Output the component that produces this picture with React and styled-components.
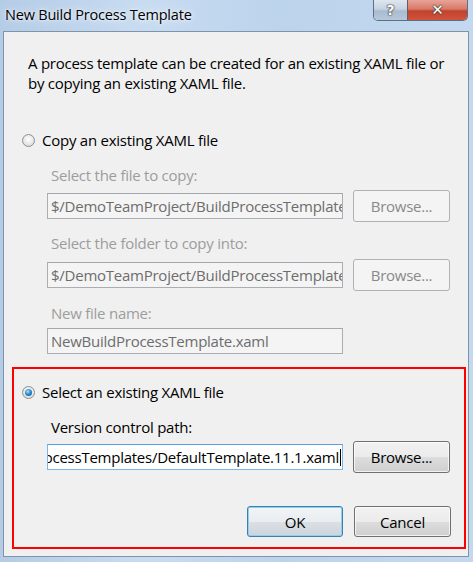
import React from 'react'
import styled, { createGlobalStyle } from 'styled-components'

const GlobalStyle = createGlobalStyle`
    html, body {
        margin: 0;
        padding: 0;
    }
    body {
        width: 473px;
        height: 562px;
        overflow: hidden;
        font-family: "Open Sans", "Noto Sans", sans-serif;
    }
`

export const Frame = styled('div')`
    width: 473px;
    height: 562px;
    box-sizing: border-box;
    display: flex;
    flex-direction: column;
    padding: 0 4px 5px 3px;
    background: linear-gradient(90deg, #b4cce6 0%, #c8dcf1 30%, #bcd3ec 60%, #c4d9ef 100%);
`

export const TitleBar = styled('div')`
    height: 31px;
    display: flex;
    align-items: flex-start;
    justify-content: space-between;
    margin-left: -3px;
    margin-right: -4px;
    padding-left: 5px;
    padding-right: 5px;
`

export const Title = styled('span')`
    font-size: 14.5px;
    letter-spacing: -0.2px;
    line-height: 30px;
    color: #000;
    text-shadow: 0 0 8px rgba(255, 255, 255, 0.9), 0 0 3px rgba(255, 255, 255, 0.9);
`

export const CaptionButtons = styled('div')`
    display: flex;
    height: 21px;
    border: 1px solid #5a6f8a;
    border-top: none;
    border-radius: 0 0 5px 5px;
    overflow: hidden;
    box-sizing: border-box;
`

export const CaptionButton = styled('div')`
    width: ${({ $w }) => $w}px;
    display: flex;
    align-items: center;
    justify-content: center;
    font-family: "DejaVu Sans", sans-serif;
    font-weight: bold;
    font-size: ${({ $close }) => ($close ? '15px' : '14px')};
    color: #fff;
    text-shadow: 0 0 1px #333, 0 0 1px #333, 0 0 2px #444;
    background: ${({ $close }) =>
        $close
            ? 'linear-gradient(180deg, #e8a497 0%, #d77a69 45%, #c2432c 55%, #d0533c 100%)'
            : 'linear-gradient(180deg, #dfe7f0 0%, #c6d3e1 45%, #a9bbd0 55%, #b7c8da 100%)'};
    border-left: ${({ $close }) => ($close ? '1px solid #6a5a64' : 'none')};
`

export const Client = styled('div')`
    flex: 1;
    background: #f0f0f0;
    border: 1px solid #8193a9;
    display: flex;
    flex-direction: column;
    font-size: 15px;
    letter-spacing: -0.25px;
    color: #000;
`

export const Description = styled('p')`
    margin: 21px 0 0 24px;
    line-height: 20px;
    width: 425px;
`

export const RadioRow = styled('label')`
    display: flex;
    align-items: center;
    gap: 7px;
    height: 20px;
    margin-top: ${({ $top }) => $top}px;
    margin-left: ${({ $left }) => $left}px;
`

export const RadioDot = styled('span')`
    width: 13px;
    height: 13px;
    border-radius: 50%;
    box-sizing: border-box;
    border: 1px solid #8e8f8f;
    background: radial-gradient(circle at 50% 40%, #ffffff 0%, #ececec 45%, #cfcfcf 100%);
    display: flex;
    align-items: center;
    justify-content: center;
    flex-shrink: 0;

    &::after {
        content: '';
        display: ${({ $checked }) => ($checked ? 'block' : 'none')};
        width: 7px;
        height: 7px;
        border-radius: 50%;
        background: radial-gradient(circle at 40% 35%, #a6e0ff 0%, #2f8fd6 45%, #0a3f80 100%);
    }
`

export const Group = styled('div')`
    display: flex;
    flex-direction: column;
    padding-left: ${({ $indent }) => $indent}px;
`

export const FieldLabel = styled('div')`
    line-height: 20px;
    margin-top: ${({ $top }) => $top}px;
    padding-left: 4px;
    color: ${({ $disabled }) => ($disabled ? '#9d9d9d' : '#000')};
`

export const FieldRow = styled('div')`
    display: flex;
    align-items: center;
    gap: ${({ $gap }) => $gap || 10}px;
    margin-top: ${({ $top }) => $top}px;
    justify-content: ${({ $end }) => ($end ? 'flex-end' : 'flex-start')};
    width: ${({ $end }) => ($end ? '404px' : 'auto')};
`

export const TextBox = styled('div')`
    width: 296px;
    height: ${({ $h }) => $h || 26}px;
    box-sizing: border-box;
    border: 1px solid ${({ $focused }) => ($focused ? '#7eb4ea' : '#abadb3')};
    border-top-color: ${({ $focused }) => ($focused ? '#569de5' : '#a3a6ad')};
    background: ${({ $disabled }) => ($disabled ? '#f4f4f4' : '#fff')};
    color: ${({ $disabled }) => ($disabled ? '#6d6d6d' : '#000')};
    display: flex;
    align-items: center;
    justify-content: ${({ $alignEnd }) => ($alignEnd ? 'flex-end' : 'flex-start')};
    padding: 0 1px 0 3px;
    overflow: hidden;
    white-space: nowrap;
`

export const Caret = styled('span')`
    display: inline-block;
    width: 1px;
    height: 17px;
    background: #000;
    margin-left: 1px;
    flex-shrink: 0;
`

export const Button = styled('div')`
    width: ${({ $w }) => $w || 97}px;
    height: ${({ $h }) => $h || 32}px;
    box-sizing: border-box;
    border-radius: 3px;
    display: flex;
    align-items: center;
    justify-content: center;
    border: 1px solid
        ${({ $disabled, $default }) => ($disabled ? '#adb2b5' : $default ? '#3c7fb1' : '#707070')};
    color: ${({ $disabled }) => ($disabled ? '#8a8a8a' : '#000')};
    background: ${({ $disabled, $default }) =>
        $disabled
            ? '#f4f4f4'
            : $default
            ? 'linear-gradient(180deg, #f2f4f6 0%, #eaedf0 50%, #dbe0e5 51%, #cdd4da 100%)'
            : 'linear-gradient(180deg, #f2f2f2 0%, #ebebeb 50%, #dddddd 51%, #cfcfcf 100%)'};
    box-shadow: ${({ $disabled, $default }) =>
        $disabled
            ? 'none'
            : $default
            ? 'inset 0 0 0 1px #8fd0f2'
            : 'inset 0 0 0 1px rgba(255,255,255,0.7)'};
`

export const Highlight = styled('div')`
    margin: 13px 2px 0 8px;
    border: 2px solid #ff0000;
    display: flex;
    flex-direction: column;
    height: 182px;
    box-sizing: border-box;
`

const DISABLED_PATH = '$/DemoTeamProject/BuildProcessTemplates'

export default function App() {
    return (
        <>
            <GlobalStyle />
            <Frame>
                <TitleBar>
                    <Title>New Build Process Template</Title>
                    <CaptionButtons>
                        <CaptionButton $w={33}>?</CaptionButton>
                        <CaptionButton $w={59} $close>
                            ✕
                        </CaptionButton>
                    </CaptionButtons>
                </TitleBar>
                <Client>
                    <Description>
                        A process template can be created for an existing XAML file or by copying an
                        existing XAML file.
                    </Description>

                    <RadioRow $top={37} $left={18}>
                        <RadioDot />
                        Copy an existing XAML file
                    </RadioRow>

                    <Group $indent={43}>
                        <FieldLabel $top={15} $disabled>
                            Select the file to copy:
                        </FieldLabel>
                        <FieldRow $top={5}>
                            <TextBox $disabled>{DISABLED_PATH}</TextBox>
                            <Button $disabled>Browse...</Button>
                        </FieldRow>
                        <FieldLabel $top={11} $disabled>
                            Select the folder to copy into:
                        </FieldLabel>
                        <FieldRow $top={6}>
                            <TextBox $disabled>{DISABLED_PATH}</TextBox>
                            <Button $disabled>Browse...</Button>
                        </FieldRow>
                        <FieldLabel $top={12} $disabled>
                            New file name:
                        </FieldLabel>
                        <FieldRow $top={5}>
                            <TextBox $disabled>NewBuildProcessTemplate.xaml</TextBox>
                        </FieldRow>
                    </Group>

                    <Highlight>
                        <RadioRow $top={13} $left={8}>
                            <RadioDot $checked />
                            Select an existing XAML file
                        </RadioRow>
                        <Group $indent={33}>
                            <FieldLabel $top={15}>Version control path:</FieldLabel>
                            <FieldRow $top={4}>
                                <TextBox $focused $alignEnd>
                                    $/DemoTeamProject/BuildProcessTemplates/DefaultTemplate.11.1.xaml
                                    <Caret />
                                </TextBox>
                                <Button>Browse...</Button>
                            </FieldRow>
                            <FieldRow $top={33} $gap={11} $end>
                                <Button $w={96} $h={31} $default>
                                    OK
                                </Button>
                                <Button $h={31}>Cancel</Button>
                            </FieldRow>
                        </Group>
                    </Highlight>
                </Client>
            </Frame>
        </>
    )
}
